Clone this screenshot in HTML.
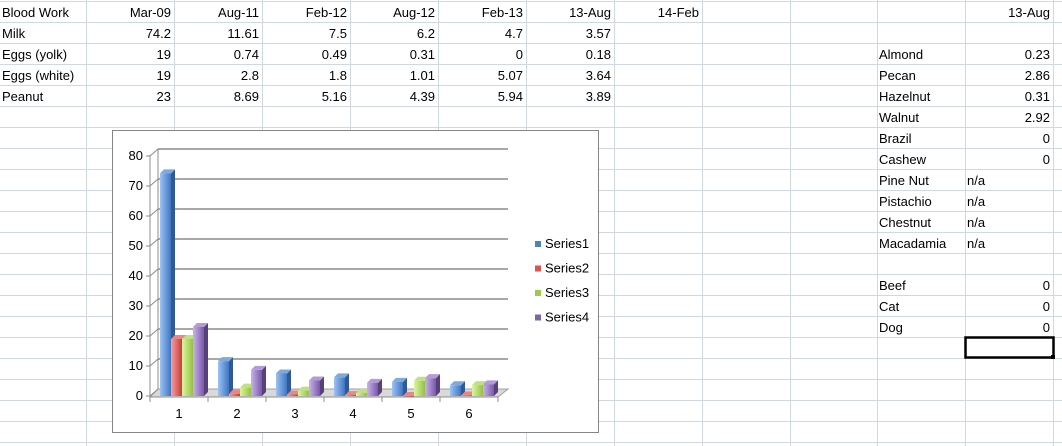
<!DOCTYPE html>
<html><head><meta charset="utf-8"><style>
html,body{margin:0;padding:0;background:#fff;width:1062px;height:446px;overflow:hidden}
svg text{font-family:"Liberation Sans",sans-serif;font-size:13px;fill:#000}
</style></head><body>
<svg id="s" width="1062" height="446" xmlns="http://www.w3.org/2000/svg">
<defs>
<linearGradient id="g0"><stop offset="0" stop-color="#9cc3f5"/><stop offset="1" stop-color="#3f75c0"/></linearGradient>
<linearGradient id="g1"><stop offset="0" stop-color="#f7a09e"/><stop offset="1" stop-color="#c93a36"/></linearGradient>
<linearGradient id="g2"><stop offset="0" stop-color="#dcf5a0"/><stop offset="1" stop-color="#94c040"/></linearGradient>
<linearGradient id="g3"><stop offset="0" stop-color="#c8b3ea"/><stop offset="1" stop-color="#7a58a8"/></linearGradient>
</defs>
<g id="grid" stroke="#d0d7e5" stroke-width="1"></g>
<g id="txt"></g>
<rect x="112.5" y="130.5" width="486" height="302" fill="#fff" stroke="#868686"/>
<g id="chart"></g>
<rect x="965.5" y="337.5" width="88" height="20" fill="none" stroke="#000" stroke-width="2.5"/>
<rect x="1051" y="355" width="4" height="4" fill="#000"/>
</svg>
<script>
(function(){
var NS="http://www.w3.org/2000/svg";
function el(p,t,a,txt){var e=document.createElementNS(NS,t);for(var k in a)e.setAttribute(k,a[k]);if(txt!==undefined)e.textContent=txt;p.appendChild(e);return e;}
var grid=document.getElementById('grid'),txt=document.getElementById('txt'),ch=document.getElementById('chart');
var cols=[0,86,174,262,350,438,526,614,702,790,877,965,1053];
cols.forEach(function(x){if(x>0)el(grid,'line',{x1:x+.5,y1:0,x2:x+.5,y2:446});});
for(var y=1;y<446;y+=21)el(grid,'line',{x1:0,y1:y+.5,x2:1062,y2:y+.5});
function T(c,r,s,right){var y=1+21*r+16;if(right)el(txt,'text',{x:cols[c+1]-3,y:y,'text-anchor':'end'},s);else el(txt,'text',{x:cols[c]+2,y:y},s);}
var data=[["Blood Work","Mar-09","Aug-11","Feb-12","Aug-12","Feb-13","13-Aug","14-Feb"],
["Milk","74.2","11.61","7.5","6.2","4.7","3.57"],
["Eggs (yolk)","19","0.74","0.49","0.31","0","0.18"],
["Eggs (white)","19","2.8","1.8","1.01","5.07","3.64"],
["Peanut","23","8.69","5.16","4.39","5.94","3.89"]];
data.forEach(function(row,r){row.forEach(function(v,c){T(c,r,v,c>0);});});
T(11,0,"13-Aug",true);
var nuts=[["Almond","0.23"],["Pecan","2.86"],["Hazelnut","0.31"],["Walnut","2.92"],["Brazil","0"],["Cashew","0"],["Pine Nut","n/a"],["Pistachio","n/a"],["Chestnut","n/a"],["Macadamia","n/a"],null,["Beef","0"],["Cat","0"],["Dog","0"]];
nuts.forEach(function(n,i){if(!n)return;T(10,2+i,n[0]);if(n[1]=="n/a")T(11,2+i,"n/a");else T(11,2+i,n[1],true);});
el(ch,'polygon',{points:"150,397 498,397 508,389 158,389",fill:"#d9d9d9",stroke:"#a0a0a0"});
for(var k=0;k<=8;k++){var gy=389-30*k;
 if(k>0)el(ch,'line',{x1:158,y1:gy,x2:508,y2:gy,stroke:"#8c8c8c","stroke-width":1.5});
 el(ch,'line',{x1:150,y1:gy+7,x2:158,y2:gy,stroke:"#8c8c8c"});
 el(ch,'line',{x1:146,y1:gy+7,x2:150,y2:gy+7,stroke:"#8c8c8c"});
 el(ch,'text',{x:143,y:gy+11,'text-anchor':'end','font-size':'11px'},String(k*10));}
el(ch,'line',{x1:150,y1:155,x2:150,y2:397,stroke:"#8c8c8c"});
el(ch,'line',{x1:158,y1:149,x2:158,y2:389,stroke:"#8c8c8c"});
el(ch,'line',{x1:150,y1:397,x2:498,y2:397,stroke:"#8c8c8c"});
for(var i=0;i<=6;i++){var tx=150+58*i;el(ch,'line',{x1:tx,y1:397,x2:tx,y2:402,stroke:"#8c8c8c"});
 if(i<6)el(ch,'text',{x:tx+29,y:418,'text-anchor':'middle','font-size':'11px'},String(i+1));}
var vals=[[74.2,19,19,23],[11.61,0.74,2.8,8.69],[7.5,0.49,1.8,5.16],[6.2,0.31,1.01,4.39],[4.7,0,5.07,5.94],[3.57,0.18,3.64,3.89]];
var sidec=["#2f5a95","#9a2d2a","#6f8f2c","#58407a"],topc=["#7fa8dd","#e88784","#c2e083","#b29cd6"];
vals.forEach(function(g,ci){g.forEach(function(v,si){
 var x=160+58*ci+si*11,w=11,h=v*3,b=396,t=b-h,d=4;
 el(ch,'polygon',{points:[x+w,b,x+w+d,b-d,x+w+d,t-d,x+w,t].join(' '),fill:sidec[si]});
 el(ch,'polygon',{points:[x,t,x+d,t-d,x+w+d,t-d,x+w,t].join(' '),fill:topc[si]});
 el(ch,'rect',{x:x,y:t,width:w,height:Math.max(h,0.5),fill:"url(#g"+si+")"});
});});
var lc=["#4f81bd","#e0504d","#9bcb49","#8064a2"];
for(var i=0;i<4;i++){var ly=241+24.5*i;el(ch,'rect',{x:535,y:ly,width:6,height:6,fill:lc[i]});
 el(ch,'text',{x:545,y:ly+7,'font-size':'11px'},"Series"+(i+1));}
})();
</script>
</body></html>
